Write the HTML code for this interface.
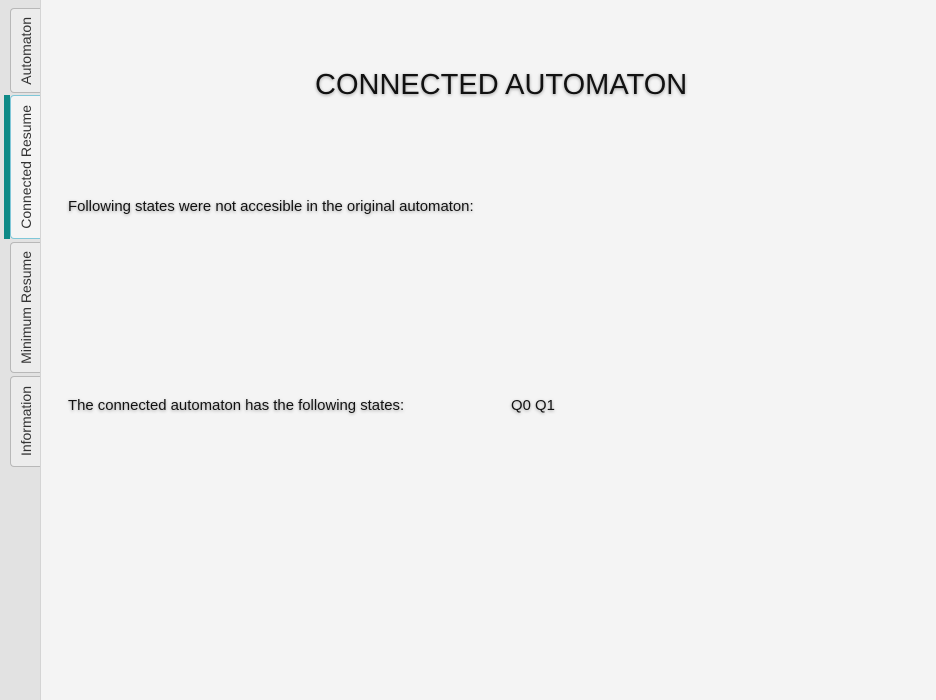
<!DOCTYPE html>
<html><head><meta charset="utf-8"><style>
html,body{margin:0;padding:0;width:936px;height:700px;overflow:hidden;background:#f4f4f4;font-family:"Liberation Sans",sans-serif;}
.strip{position:absolute;left:0;top:0;width:40px;height:700px;background:#e2e2e2;border-right:1px solid #d4d4d4;}
.tab{position:absolute;left:10px;width:30px;background:#ececec;border:1px solid #b8b8b8;border-right:none;border-radius:4px 0 0 4px;box-sizing:border-box;display:flex;align-items:center;justify-content:center;}
.tab span{writing-mode:vertical-rl;transform:rotate(180deg);font-size:14px;color:#333;white-space:nowrap;}
.sel{background:#f4f4f4;border-color:#7fc7d8;}
.bar{position:absolute;left:4px;top:95px;width:6px;height:144px;background:#0e8a87;}
.t{position:absolute;color:#111;text-shadow:0 1px 3px rgba(0,0,0,0.35);white-space:nowrap;}
</style></head><body>
<div class="strip"></div>
<div class="tab" style="top:8px;height:85px"><span>Automaton</span></div>
<div class="tab sel" style="top:95px;height:144px"><span>Connected Resume</span></div>
<div class="bar"></div>
<div class="tab" style="top:242px;height:131px"><span>Minimum Resume</span></div>
<div class="tab" style="top:376px;height:91px"><span>Information</span></div>
<div class="t" style="left:315px;top:69px;font-size:29px;letter-spacing:0">CONNECTED AUTOMATON</div>
<div class="t" style="left:68px;top:199px;font-size:14.9px">Following states were not accesible in the original automaton:</div>
<div class="t" style="left:68px;top:398px;font-size:14.9px">The connected automaton has the following states:</div>
<div class="t" style="left:511px;top:398px;font-size:14.9px">Q0 Q1</div>
</body></html>
